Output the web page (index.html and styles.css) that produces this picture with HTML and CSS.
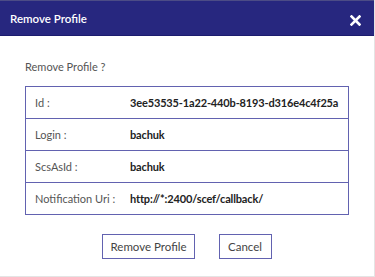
FILE: index.html
```html
<!DOCTYPE html>
<html lang="en">

<head>
    <meta charset="UTF-8">
    <meta name="viewport" content="width=device-width, initial-scale=1.0">
    <title>Remove Profile</title>
    <link rel="stylesheet" href="styles.css">
</head>

<body>
    <div class="dialog">
        <div class="dialog-header">
            <h1>Remove Profile</h1>
            <button class="close" aria-label="Close">
                <svg width="11" height="11" viewBox="0 0 11 11">
                    <path d="M1.5 1.5 L9.5 9.5 M9.5 1.5 L1.5 9.5" stroke="#fff" stroke-width="2.6" stroke-linecap="square" fill="none"/>
                </svg>
            </button>
        </div>
        <div class="dialog-body">
            <p class="question">Remove Profile ?</p>
            <table class="info-table">
                <tr>
                    <td class="label">Id :</td>
                    <td class="value">3ee53535-1a22-440b-8193-d316e4c4f25a</td>
                </tr>
                <tr>
                    <td class="label">Login :</td>
                    <td class="value">bachuk</td>
                </tr>
                <tr>
                    <td class="label">ScsAsId :</td>
                    <td class="value">bachuk</td>
                </tr>
                <tr>
                    <td class="label">Notification Uri :</td>
                    <td class="value">http://*:2400/scef/callback/</td>
                </tr>
            </table>
            <div class="actions">
                <button class="btn">Remove Profile</button>
                <button class="btn">Cancel</button>
            </div>
        </div>
    </div>
</body>

</html>
```

FILE: styles.css
```css
body {
    margin: 0;
    font-family: Lato, "Noto Sans", sans-serif;
    background-color: #fff;
    color: #333;
}

.dialog {
    width: 374px;
    height: 276px;
    border-right: 1px solid #e4e4e4;
    border-bottom: 1px solid #e4e4e4;
    background-color: #fff;
}

.dialog-header {
    height: 34px;
    border-top: 1px solid #4c4c86;
    border-bottom: 1px solid #1c1c6e;
    background-color: #27277f;
    display: flex;
    align-items: center;
    justify-content: space-between;
    padding: 0 13px 0 10px;
}

.dialog-header h1 {
    margin: 0;
    font-size: 11.5px;
    font-weight: 600;
    color: #fff;
}

.close {
    background: none;
    border: none;
    padding: 0;
    display: flex;
    margin-top: 4px;
}

.dialog-body {
    padding: 0 25px;
}

.question {
    margin: 0;
    padding-top: 24px;
    height: 26px;
    font-size: 11px;
    color: #555;
}

.info-table {
    width: 100%;
    table-layout: fixed;
    border-collapse: collapse;
    border: 1px solid #6262b0;
}

.info-table td {
    border-top: 1px solid #6262b0;
    height: 31px;
    padding: 0;
    font-size: 11px;
    white-space: nowrap;
}

.info-table .label {
    width: 95px;
    padding-left: 9px;
    color: #555;
}

.info-table .value {
    font-weight: bold;
    letter-spacing: -0.15px;
    color: #222;
}

.actions {
    display: flex;
    justify-content: center;
    gap: 24px;
    margin-top: 19px;
}

.btn {
    height: 25px;
    min-width: 53px;
    padding: 0 7px;
    background-color: #fff;
    border: 1px solid #6262b0;
    font-family: inherit;
    font-size: 11.5px;
    color: #444;
    cursor: pointer;
}
```
